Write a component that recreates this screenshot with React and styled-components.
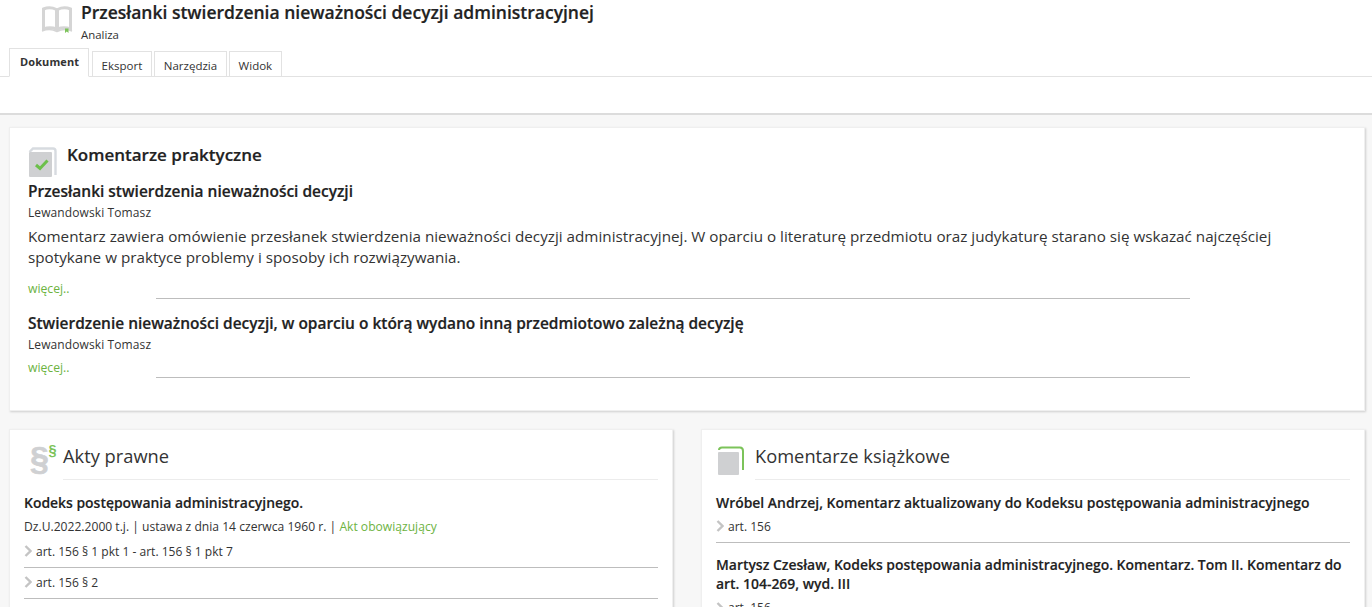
import React from "react";
import styled, { createGlobalStyle } from "styled-components";

const Global = createGlobalStyle`
  html, body { margin: 0; padding: 0; background: #f7f7f7; height: 607px; overflow: hidden; }
  body { font-family: "Open Sans", "Liberation Sans", sans-serif; color: #222; }
  * { box-sizing: border-box; }
`;
const Page = styled.div`width: 1372px; height: 607px; overflow: hidden;`;
const Header = styled.header`
  height: 115px; background: #fff; border-bottom: 2px solid #dcdcdc;
`;
const TitleRow = styled.div`display: flex; height: 44px;`;
const BookSlot = styled.div`width: 81px; padding: 6px 0 0 41px; flex: none;`;
const TitleText = styled.div`padding-top: 1px;`;
const Title = styled.h1`
  margin: 0; font-size: 17.5px; line-height: 23px; font-weight: 600; color: #222;
  -webkit-text-stroke: 0.2px #222;
`;
const Sub = styled.div`font-size: 11.4px; line-height: 15px; margin-top: 3px; color: #333;`;
const Tabs = styled.nav`
  display: flex; align-items: flex-end; gap: 2px; height: 33px; padding-left: 9px;
  border-bottom: 1px solid #e2e2e2;
`;
const Tab = styled.div`
  height: ${p => (p.$active ? "29px" : "26px")};
  margin-bottom: -1px; margin-right: ${p => (p.$active ? "1px" : "0")};
  padding: ${p => (p.$active ? "4px 9px 0 10px" : "5px 9px 0 8.5px")};
  background: #fff; border: 1px solid #e2e2e2; border-bottom: ${p => (p.$active ? "1px solid #fff" : "1px solid #e2e2e2")};
  font-size: ${p => (p.$active ? "11px" : "11.5px")}; line-height: 18px; font-weight: ${p => (p.$active ? 700 : 400)};
  letter-spacing: ${p => (p.$active ? "0.1px" : "0")}; color: #333;
`;
const Main = styled.main`padding: 12px 7px 0 9px;`;
const Card = styled.section`
  background: #fff; border: 1px solid #efefef; box-shadow: 1px 1px 2px rgba(0,0,0,.16);
`;
const TopCard = styled(Card)`height: 284px; padding: 18px 18px 0;`;
const TopHead = styled.div`display: flex; height: 35px; gap: 10px;`;
const TopHeading = styled.h2`margin: -2px 0 0; font-size: 17px; line-height: 21px; font-weight: 600; color: #222; -webkit-text-stroke: 0.2px #222;`;
const Entry = styled.article``;
const EntryTitle = styled.h3`margin: ${p => p.$top || 0}px 0 0; font-size: 15.47px; line-height: 21px; font-weight: 600; color: #222; -webkit-text-stroke: 0.2px #222;`;
const Author = styled.div`font-size: 12px; letter-spacing: .1px; line-height: 15px; margin-top: 3px; color: #333;`;
const Body = styled.p`margin: 6px 0 0; width: 1280px; font-size: 15.24px; line-height: 21px; color: #333;`;
const MoreRow = styled.div`position: relative; height: 16px; font-size: 12.2px; line-height: 15px; color: #6db33f; margin-top: ${p => p.$top}px;`;
const MoreRule = styled.div`position: absolute; left: 128px; width: 1034px; top: 17px; border-top: 1px solid #bdbdbd;`;
const Columns = styled.div`display: grid; grid-template-columns: 664px 664px; gap: 28px; margin-top: 18px;`;
const SideCard = styled(Card)`height: 300px; padding: 0 14px;`;
const SideHead = styled.div`display: flex; align-items: flex-start; height: 50px; `;
const IconSlot = styled.div`width: 39px; flex: none; padding-top: ${p => p.$top || 12}px; padding-left: ${p => p.$left || 0}px;`;
const SideTitleBox = styled.div`flex: 1; height: 50px; border-bottom: 1px solid #ececec; padding-top: 13px;`;
const SideTitle = styled.h2`margin: 0; font-size: 18.3px; line-height: 26px; font-weight: 400; color: #333;`;
const DocTitle = styled.h3`margin: ${p => p.$top || 13}px 0 0; font-size: 13.93px; line-height: 19px; font-weight: 600; color: #222; -webkit-text-stroke: 0.15px #222;`;
const Meta = styled.div`font-size: 12.12px; line-height: 15px; margin: 7px 0 3px; color: #333; white-space: nowrap;`;
const Sep = styled.span`color: #333;`;
const Status = styled.span`color: #6db33f;`;
const ArtRow = styled.div`
  display: flex; align-items: center; gap: 4px; height: ${p => p.$h || 31}px; padding-bottom: 2px;
  font-size: 12.05px; color: #333; border-bottom: ${p => (p.$plain ? "0" : "1px solid #bdbdbd")};
`;

const Chevron = () => (
  <svg width="8" height="12" viewBox="0 0 8 12"><path d="M1.5 1 L6.5 6 L1.5 11" fill="none" stroke="#c4c4c4" strokeWidth="2.4" /></svg>
);
const BookIcon = () => (
  <svg width="32" height="28" viewBox="0 0 32 28" style={{ display: "block" }}>
    <path d="M2.5 3 Q9 0.5 15.5 3.5 V23 Q9 20.5 2.5 23 Z M16.5 3.5 Q23 0.5 29.5 3 V23 Q23 20.5 16.5 23 Z" fill="#fff" stroke="#d5d5d5" strokeWidth="3" />
    <path d="M1 25 Q9 22 16 25.5 Q23 22 31 25" fill="none" stroke="#d5d5d5" strokeWidth="1.5" />
    <path d="M24 22.5 h3.5 v4.5 l-1.7-1.6 L24 27 Z" fill="#7cc35a" />
  </svg>
);
const CheckDocIcon = () => (
  <svg width="29" height="32" viewBox="0 0 29 32" style={{ display: "block", marginTop: 1 }}>
    <path d="M1.5 5 L5 1.5 H25 Q27.5 1.5 27.5 4 V28" fill="none" stroke="#d7dbe0" strokeWidth="2.4" />
    <rect x="1" y="5" width="23" height="25" rx="1" fill="#cfd0d2" />
    <path d="M8 18 L12 21.5 L19.5 13.5" fill="none" stroke="#6cc04a" strokeWidth="3" />
  </svg>
);
const ParaIcon = () => (
  <svg width="28" height="36" viewBox="0 0 28 36" style={{ display: "block" }}>
    <text x="0" y="28" fontFamily="'Liberation Sans', sans-serif" fontWeight="700" fontSize="34" fill="#cfd0d2" stroke="#cfd0d2" strokeWidth=".6">§</text>
    <text x="18.5" y="13" fontFamily="'Liberation Sans', sans-serif" fontWeight="700" fontSize="14.5" fill="#7cc35a">§</text>
  </svg>
);
const BookmarkDocIcon = () => (
  <svg width="29" height="31" viewBox="0 0 29 31" style={{ display: "block" }}>
    <path d="M3 5 Q3 2.5 6 2.5 H24 Q27 2.5 27 6 V25" fill="none" stroke="#7cc35a" strokeWidth="2" />
    <rect x="2" y="7" width="21" height="23" rx="1" fill="#cfd0d2" />
  </svg>
);

export default function App() {
  return (
    <Page>
      <Global />
      <Header>
        <TitleRow>
          <BookSlot><BookIcon /></BookSlot>
          <TitleText>
            <Title>Przesłanki stwierdzenia nieważności decyzji administracyjnej</Title>
            <Sub>Analiza</Sub>
          </TitleText>
        </TitleRow>
        <Tabs>
          <Tab $active>Dokument</Tab>
          <Tab>Eksport</Tab>
          <Tab>Narzędzia</Tab>
          <Tab>Widok</Tab>
        </Tabs>
      </Header>
      <Main>
        <TopCard>
          <TopHead>
            <CheckDocIcon />
            <TopHeading>Komentarze praktyczne</TopHeading>
          </TopHead>
          <Entry>
            <EntryTitle>Przesłanki stwierdzenia nieważności decyzji</EntryTitle>
            <Author>Lewandowski Tomasz</Author>
            <Body>Komentarz zawiera omówienie przesłanek stwierdzenia nieważności decyzji administracyjnej. W oparciu o literaturę przedmiotu oraz judykaturę starano się wskazać najczęściej spotykane w praktyce problemy i sposoby ich rozwiązywania.</Body>
            <MoreRow $top={13}>więcej..<MoreRule /></MoreRow>
          </Entry>
          <Entry>
            <EntryTitle $top={16}>Stwierdzenie nieważności decyzji, w oparciu o którą wydano inną przedmiotowo zależną decyzję</EntryTitle>
            <Author>Lewandowski Tomasz</Author>
            <MoreRow $top={8}>więcej..<MoreRule /></MoreRow>
          </Entry>
        </TopCard>
        <Columns>
          <SideCard>
            <SideHead>
              <IconSlot $left={6}><ParaIcon /></IconSlot>
              <SideTitleBox><SideTitle>Akty prawne</SideTitle></SideTitleBox>
            </SideHead>
            <DocTitle>Kodeks postępowania administracyjnego.</DocTitle>
            <Meta>Dz.U.2022.2000 t.j. <Sep>|</Sep> ustawa z dnia 14 czerwca 1960 r. <Sep>|</Sep> <Status>Akt obowiązujący</Status></Meta>
            <ArtRow><Chevron />art. 156 § 1 pkt 1 - art. 156 § 1 pkt 7</ArtRow>
            <ArtRow><Chevron />art. 156 § 2</ArtRow>
          </SideCard>
          <SideCard>
            <SideHead>
              <IconSlot $top={15}><BookmarkDocIcon /></IconSlot>
              <SideTitleBox><SideTitle>Komentarze książkowe</SideTitle></SideTitleBox>
            </SideHead>
            <DocTitle>Wróbel Andrzej, Komentarz aktualizowany do Kodeksu postępowania administracyjnego</DocTitle>
            <ArtRow $h={31}><Chevron />art. 156</ArtRow>
            <DocTitle $top={12}>Martysz Czesław, Kodeks postępowania administracyjnego. Komentarz. Tom II. Komentarz do art. 104-269, wyd. III</DocTitle>
            <ArtRow $plain><Chevron />art. 156</ArtRow>
          </SideCard>
        </Columns>
      </Main>
    </Page>
  );
}
